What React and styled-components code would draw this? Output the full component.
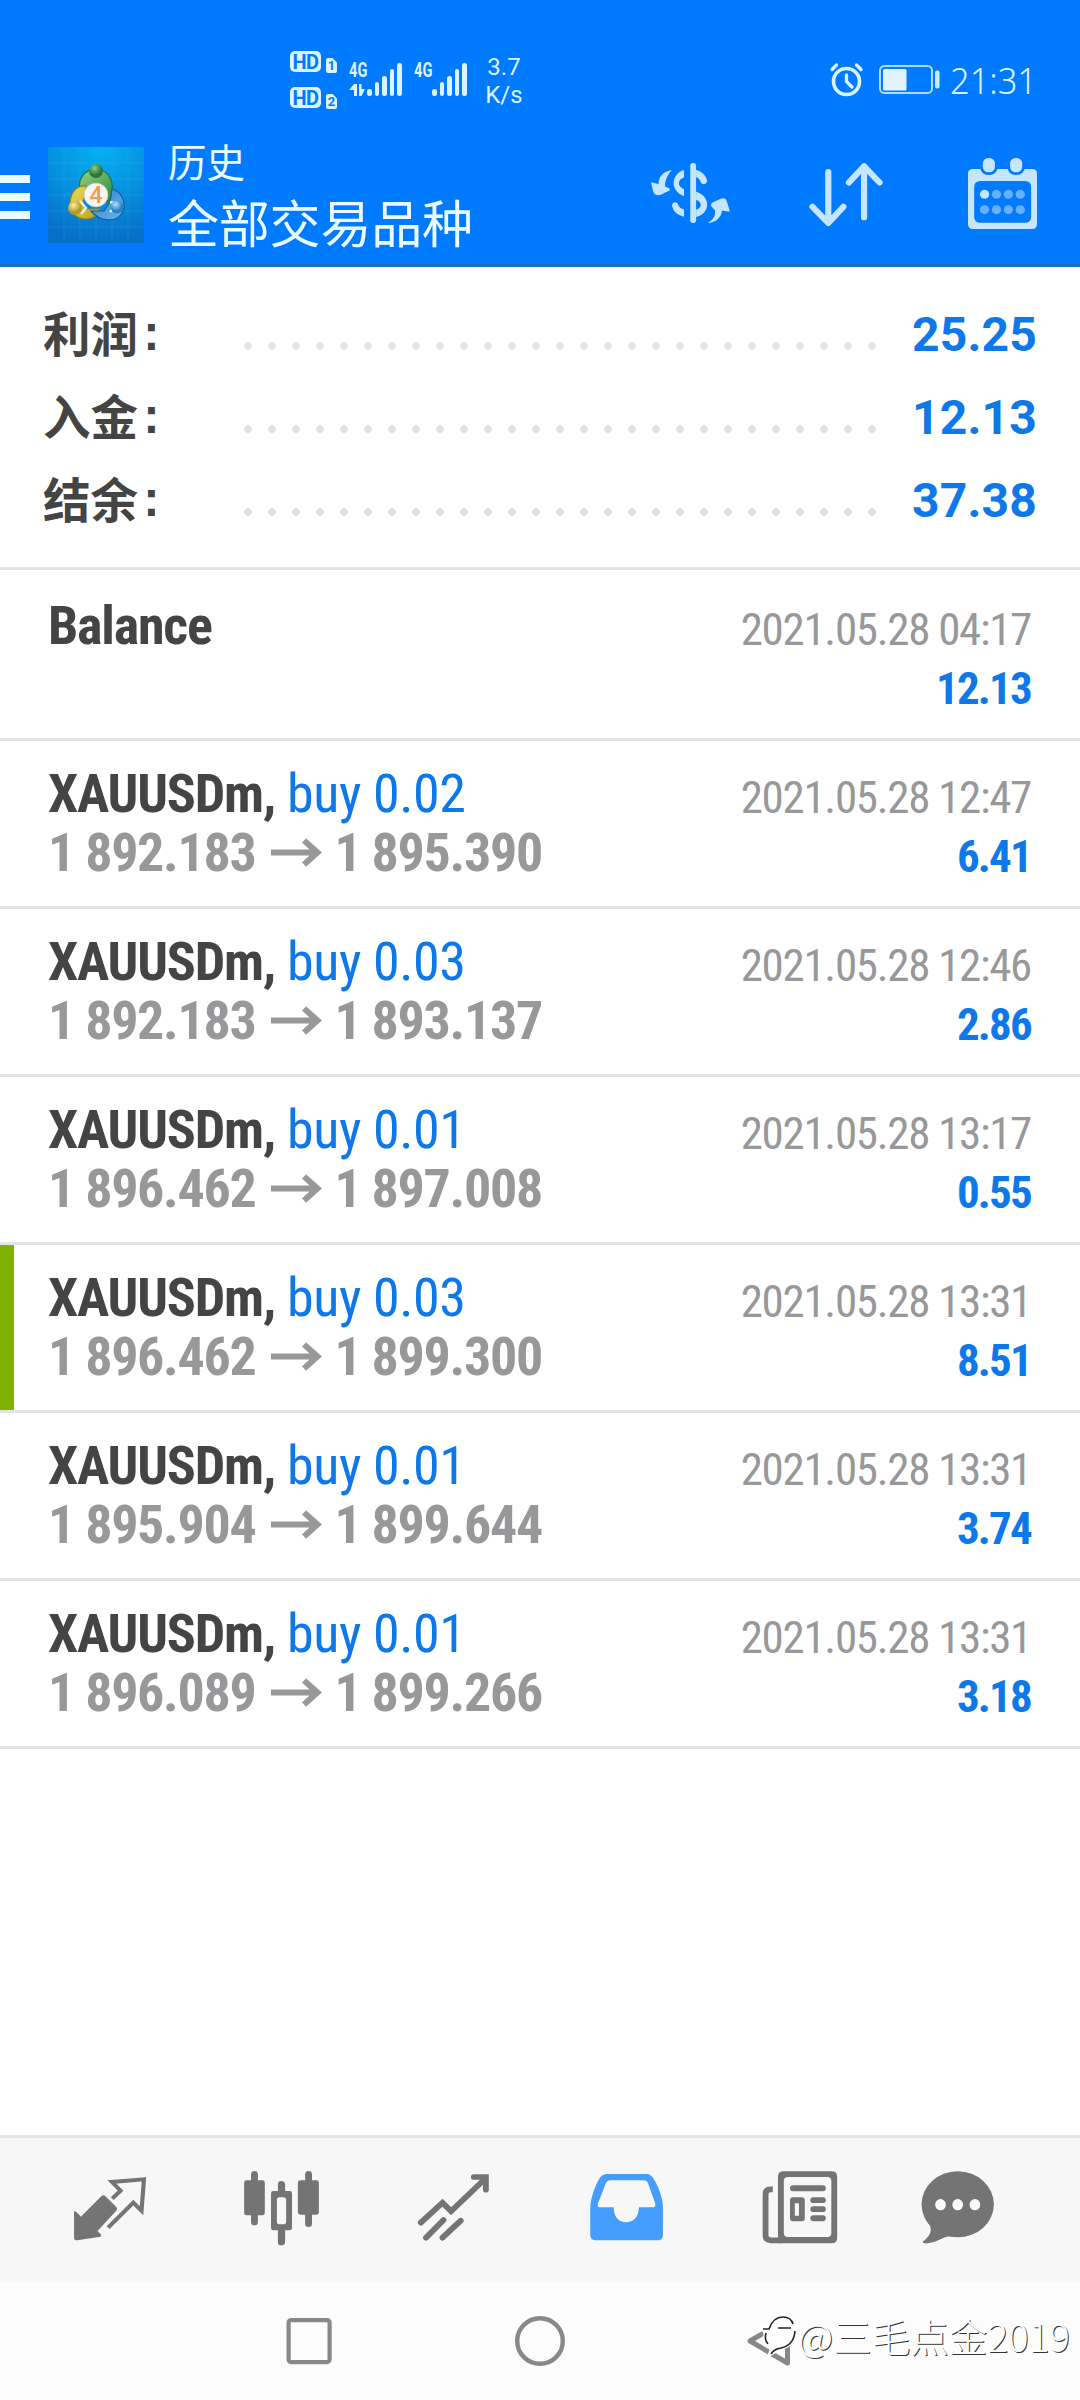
import React from 'react';
import styled, { createGlobalStyle } from 'styled-components';

const Global = createGlobalStyle`
  * { box-sizing: border-box; }
  body { margin: 0; background: #fff; font-family: Roboto, "Noto Sans CJK SC", sans-serif; }
  svg { display: block; overflow: visible; flex: none; }
`;

const Screen = styled.div`
  width: 1080px;
  height: 2400px;
  display: flex;
  flex-direction: column;
  background: #fff;
  overflow: hidden;
  position: relative;
`;

const Header = styled.header`
  height: 267px;
  background: #007aff;
  border-bottom: 3px solid #1a72c4;
  flex: none;
`;

const StatusBar = styled.div`
  height: 112px;
  display: flex;
  align-items: flex-start;
  padding: 51px 48px 0 290px;
  color: #dbf4ff;
`;

const HdColumn = styled.div`
  display: flex;
  flex-direction: column;
  gap: 15px;
  width: 59px;
`;

const HdLine = styled.div`
  display: flex;
  align-items: flex-end;
  gap: 5px;
  height: 21px;
`;

const HdBadge = styled.span`
  width: 31px;
  height: 21px;
  border-radius: 5px;
  background: #dbf4ff;
  color: #007aff;
  font: 700 20px/22px Roboto, sans-serif;
  letter-spacing: -0.5px;
  text-align: center;
`;

const SimBadge = styled.span`
  width: 11px;
  height: 15px;
  margin-bottom: -1px;
  border-radius: 2px;
  clip-path: polygon(0 0, 60% 0, 100% 30%, 100% 100%, 0 100%);
  background: #dbf4ff;
  color: #007aff;
  font: 700 13px/16px Roboto, sans-serif;
  text-align: center;
`;

const Signal = styled.div`
  display: flex;
  width: ${p => p.$width}px;
  padding-top: 12px;
`;

const NetworkLabel = styled.div`
  width: 18px;
  height: 35px;
  display: flex;
  flex-direction: column;
  gap: 6px;
`;

const NetworkText = styled.span`
  font: 700 20px/15px Roboto, sans-serif;
  transform: scaleX(0.73);
  transform-origin: left;
`;

const Bars = styled.div`
  display: flex;
  align-items: flex-end;
  gap: 3px;
  height: 33px;
`;

const Bar = styled.i`
  width: 4.6px;
  height: ${p => p.$h}px;
  border-radius: 2.3px;
  background: #dbf4ff;
`;

const Speed = styled.div`
  width: 48px;
  margin-top: 2px;
  font: 400 24px/28px Roboto, sans-serif;
  text-align: center;
`;

const StatusRight = styled.div`
  margin-left: auto;
  display: flex;
  align-items: flex-start;
  padding-top: 12px;
`;

const Clock = styled.span`
  width: 82px;
  margin-left: 10px;
  font: 300 37px/34px "Noto Sans", Roboto, sans-serif;
  white-space: nowrap;
  transform: scaleX(0.93);
  transform-origin: left;
`;

const Toolbar = styled.div`
  height: 152px;
  display: flex;
  align-items: flex-start;
  color: #eafcff;
`;

const MenuButton = styled.div`
  width: 30px;
  margin: 63px 18px 0 0;
  display: flex;
  flex-direction: column;
  gap: 10px;
`;

const MenuLine = styled.i`
  height: 8px;
  background: #eafcff;
`;

const LogoBox = styled.div`
  margin-top: 35px;
`;

const Titles = styled.div`
  margin: 30px 0 0 24px;
  width: 483px;
`;

const Subtitle = styled.div`
  font: 400 38.5px/44px "Liberation Sans", "Noto Sans CJK SC", sans-serif;
`;

const Title = styled.div`
  margin-top: 10px;
  font: 400 51px/60px "Liberation Sans", "Noto Sans CJK SC", sans-serif;
  letter-spacing: -0.2px;
`;

const Action = styled.div`
  margin-top: ${p => p.$top}px;
  margin-right: ${p => p.$gap}px;
  color: #c6e6ff;
`;

const Summary = styled.section`
  height: 300px;
  padding: 26px 43px 0;
  flex: none;
`;

const SummaryRow = styled.div`
  height: 83px;
  display: flex;
  align-items: center;
`;

const SummaryLabel = styled.span`
  width: 193px;
  color: #444;
  font: 700 47.5px/78px "Noto Sans CJK SC", sans-serif;
  height: 83px;
  display: flex;
`;

const Colon = styled.span`
  margin-left: -1px;
  font: 700 48px/88px "Liberation Mono", monospace;
`;

const Dots = styled.div`
  width: 648px;
  height: 8px;
  margin-top: 23px;
  background: radial-gradient(circle at 12px 4px, #e3e3e3 3.4px, transparent 4.2px) 0 0 / 24px 8px repeat-x;
`;

const SummaryValue = styled.span`
  flex: 1;
  color: #0d78ea;
  font: 700 48px/83px Roboto, sans-serif;
  letter-spacing: 0.2px;
  text-align: right;
  white-space: nowrap;
`;

const History = styled.main`
  flex: 1;
  border-top: 3px solid #e4e4e4;
  padding-top: 3px;
`;

const Deal = styled.article`
  height: 168px;
  display: flex;
  justify-content: space-between;
  padding: 23px 49px 0 48px;
  border-bottom: 3px solid #e4e4e4;
  box-shadow: ${p => (p.$marked ? 'inset 14px 0 0 #7fb200' : 'none')};
`;

const DealInfo = styled.div`
  font: 700 54px/59px "Roboto Condensed", Roboto, sans-serif;
  font-stretch: 75%;
  letter-spacing: -1.2px;
  color: #444;
  white-space: nowrap;
`;

const Side = styled.span`
  font-weight: 400;
  letter-spacing: -0.4px;
  color: #0d78ea;
`;

const Prices = styled.div`
  display: flex;
  align-items: center;
  letter-spacing: -1.3px;
  color: #98989b;

  svg { margin: 0 12px 0 16px; }
`;

const DealMeta = styled.div`
  padding-top: 4px;
  font: 400 45px/59px "Roboto Condensed", Roboto, sans-serif;
  font-stretch: 75%;
  letter-spacing: -1.3px;
  color: #98989b;
  text-align: right;
  white-space: nowrap;
`;

const Amount = styled.div`
  font-weight: 700;
  letter-spacing: -1.8px;
  color: #0d78ea;
`;

const TabBar = styled.nav`
  height: 147px;
  flex: none;
  display: grid;
  grid-template-columns: repeat(6, 172px);
  justify-items: center;
  padding: 29px 24px 0;
  background: #f7f7f7;
  border-top: 3px solid #e4e4e4;
`;

const Tab = styled.div`
  color: ${p => (p.$active ? '#459dff' : '#747474')};
`;

const SystemNav = styled.footer`
  height: 118px;
  flex: none;
  display: grid;
  grid-template-columns: repeat(3, 231px);
  justify-content: center;
  justify-items: center;
  padding-top: 34px;
  background: #fcfcfc;
`;

const Watermark = styled.div`
  position: absolute;
  left: 759px;
  top: 2309px;
  display: flex;
  align-items: center;
  height: 52px;
  color: #fff;
  font: 300 38.6px/52px "Noto Sans CJK SC", sans-serif;
  text-shadow: 1px 1px 0.5px #333;
  white-space: nowrap;
`;

const HD = ({ n }) => (
  <HdLine>
    <HdBadge>HD</HdBadge>
    <SimBadge>{n}</SimBadge>
  </HdLine>
);

const SignalBars = () => (
  <Bars>
    {[7, 14, 20, 27, 33].map(h => <Bar key={h} $h={h} />)}
  </Bars>
);

const DataArrows = () => (
  <svg width="16" height="12" viewBox="0 0 16 12" fill="currentColor">
    <path d="M5 0H8V12H5V6H0Z M10 0H12.5V5H16L12.5 12H10Z" />
  </svg>
);

const AlarmIcon = () => (
  <svg width="33" height="34" viewBox="0 0 33 34" fill="none" stroke="currentColor" strokeLinecap="round">
    <circle cx="16.5" cy="18.5" r="13" strokeWidth="3.6" />
    <path d="M16.5 12V18.5L22 24" strokeWidth="3.4" strokeLinejoin="round" />
    <path d="M2 6.5L6.5 2M31 6.5L26.5 2" strokeWidth="3.4" />
  </svg>
);

const Battery = styled.svg`
  margin: 2px 0 0 16px;
`;

const BatteryIcon = () => (
  <Battery width="61" height="29" viewBox="0 0 61 29">
    <rect x="1" y="1" width="52" height="27" rx="4.5" fill="none" stroke="#a9dcff" strokeWidth="2" />
    <rect x="4" y="4" width="23.5" height="21.5" rx="1.5" fill="#e2f2ff" />
    <rect x="56" y="5.5" width="4.5" height="18" rx="2" fill="#c9ebff" />
  </Battery>
);

const Logo = () => (
  <svg width="96" height="96" viewBox="0 0 96 96">
    <defs>
      <radialGradient id="sky" cx="0.55" cy="0" r="1">
        <stop offset="0" stopColor="#05b1f2" />
        <stop offset="0.5" stopColor="#0693df" />
        <stop offset="1" stopColor="#066fc8" />
      </radialGradient>
      <linearGradient id="green" x2="1" y2="1"><stop stopColor="#9bd187" /><stop offset="1" stopColor="#2c8a35" /></linearGradient>
      <linearGradient id="gold" x2="1" y2="1"><stop stopColor="#efdc5c" /><stop offset="1" stopColor="#b7a01f" /></linearGradient>
      <linearGradient id="azure" x2="1" y2="1"><stop stopColor="#2a83cb" /><stop offset="1" stopColor="#69b5ec" /></linearGradient>
      <radialGradient id="gBall" cx="0.4" cy="0.3"><stop stopColor="#8ccf83" /><stop offset="1" stopColor="#29783a" /></radialGradient>
      <radialGradient id="yBall" cx="0.4" cy="0.3"><stop stopColor="#fff0a0" /><stop offset="1" stopColor="#b29a2d" /></radialGradient>
      <radialGradient id="bBall" cx="0.4" cy="0.3"><stop stopColor="#b5e2ff" /><stop offset="1" stopColor="#2b7fc2" /></radialGradient>
    </defs>
    <rect width="96" height="96" fill="url(#sky)" />
    <path d="M16 0V96M32 0V96M48 0V96M64 0V96M80 0V96M0 16H96M0 32H96M0 48H96M0 64H96M0 80H96" stroke="#5cc8ff" strokeOpacity="0.14" strokeWidth="1" />
    <path d="M33 46C29 36 33 23 48 22C62 23 67 36 63 50L60 56L53 42Q47 35 42 42Z" fill="url(#green)" stroke="#1e7442" strokeWidth="1.2" />
    <path d="M38 39C28 38 22 46 22 58C23 70 36 76 48 69L52 62L38 62Q32 58 38 48Z" fill="url(#gold)" stroke="#85812a" strokeWidth="1.2" />
    <path d="M64 42C74 45 79 56 74 66C68 76 52 75 43 64L56 64L62 55Z" fill="url(#azure)" stroke="#145c9c" strokeWidth="1.2" />
    <path d="M32 54L38 61L33 67M62 55L70 57L62 65" fill="none" stroke="#e6f3e2" strokeWidth="2.4" />
    <circle cx="48" cy="24" r="7" fill="url(#gBall)" />
    <circle cx="27" cy="61" r="7" fill="url(#yBall)" />
    <circle cx="69" cy="60" r="6.5" fill="url(#bBall)" />
    <circle cx="48" cy="48" r="12" fill="#f7f5f3" stroke="#b9bdb5" strokeWidth="0.6" />
    <text x="48" y="56" textAnchor="middle" fill="#ee9d4b" fontFamily="Roboto, sans-serif" fontSize="23" fontWeight="500">4</text>
  </svg>
);

const CurrencyIcon = () => (
  <svg width="78.5" height="60" viewBox="322 398 228 181" preserveAspectRatio="none" fill="currentColor">
    <rect x="436" y="398" width="17" height="181" rx="8" />
    <path d="M383 419C358 424 344 438 344 461L322 456L329 486Q335 498 350 494L376 481V475L363 469C362 450 372 430 383 419Z" />
    <path d="M487 579C500 570 510 560 508 541L496 527L498 519L524 506Q537 501 541 510L550 540V545L528 541C527 562 510 577 487 579Z" />
    <path d="M418 419C380 430 376 482 418 498V477C398 469 398 449 418 441Z" />
    <path d="M383 527C383 514 398 512 401 524Q405 535 418 538V560Q387 552 383 527Z" />
    <path d="M453 418Q480 427 485 451C485 464 470 465 466 455Q464 445 453 440Z" />
    <path d="M453 485C498 499 494 552 453 561V539C471 534 471 516 453 509Z" />
  </svg>
);

const SortIcon = () => (
  <svg width="74" height="63" viewBox="781 398 215 190" preserveAspectRatio="none" fill="none" stroke="currentColor" strokeWidth="18" strokeLinecap="round" strokeLinejoin="round">
    <path d="M837 425V578M791 530L837 579L881 530" />
    <path d="M941 562V408M897 457L941 408L986 457" />
  </svg>
);

const CalendarIcon = () => (
  <svg width="69" height="71" viewBox="1243 384 200 213" preserveAspectRatio="none" fill="currentColor">
    <path fillRule="evenodd" d="M1257 417H1429Q1443 417 1443 431V583Q1443 597 1429 597H1257Q1243 597 1243 583V431Q1243 417 1257 417ZM1279 453Q1261 453 1261 471V560Q1261 578 1279 578H1408Q1426 578 1426 560V471Q1426 453 1408 453Z" />
    {[1286, 1365].map(x => (
      <rect key={x} x={x - 4} y="380" width="43" height="51" rx="20" stroke="#007aff" strokeWidth="8" />
    ))}
    {[493, 539].map(y => [1291, 1325.5, 1360, 1394.5].map(x => (
      <circle key={x + '-' + y} cx={x} cy={y} r="13.5" fill={x === 1291 && y === 493 ? '#c6e6ff' : '#66b0ff'} />
    )))}
  </svg>
);

const TabSvg = ({ cx, children }) => (
  <svg width="100" height="80" viewBox={`${cx - 145.2} 140 290.4 240`} preserveAspectRatio="none" fill="currentColor">
    {children}
  </svg>
);

const QuotesIcon = () => (
  <TabSvg cx={319.4}>
    <path d="M294 228Q300 222 306 228L337 259Q343 266 337 272L283 332L294 343L292 349L224 360Q215 360 215 352V272Q223 274 235 289Z" />
    <path d="M326 235L350 211L325 185L418 177L411 271L387 247L314 322" fill="none" stroke="currentColor" strokeWidth="12" />
  </TabSvg>
);

const ChartIcon = () => (
  <TabSvg cx={818.9}>
    <rect x="709" y="180" width="60" height="105" rx="7" />
    <rect x="729" y="152" width="20" height="163" rx="10" />
    <rect x="865" y="180" width="61" height="103" rx="7" />
    <rect x="886" y="152" width="20" height="168" rx="10" />
    <path fillRule="evenodd" d="M794 212H807V192Q807 182 817 182T828 192V212H841Q848 212 848 219V323Q848 330 841 330H828V365Q828 375 817 375T807 365V330H794Q787 330 787 323V219Q787 212 794 212ZM812 231Q804 231 804 239V304Q804 312 812 312H823Q831 312 831 304V239Q831 231 823 231Z" />
  </TabSvg>
);

const TradeIcon = () => (
  <TabSvg cx={1318.4}>
    <g fill="none" stroke="currentColor" strokeWidth="17" strokeLinecap="round">
      <path d="M1222 307L1285 247L1310 273L1408 176" />
      <path d="M1376 170H1411V208" />
      <path d="M1237 352L1288 299M1285 352L1338 301" />
    </g>
  </TabSvg>
);

const HistoryIcon = () => (
  <TabSvg cx={249.7}>
    <path fillRule="evenodd" d="M195 161H310Q322 161 330 175C345 200 357 235 357 260V345Q357 360 342 360H162Q146 360 146 345V260C147 235 158 200 172 175Q180 161 195 161ZM205 180Q194 180 190 192L168 250Q166 261 175 261H214C214 292 230 306 250 306S287 292 287 261H328Q336 261 335 250L314 190Q311 180 300 180Z" />
  </TabSvg>
);

const NewsIcon = () => (
  <TabSvg cx={749.2}>
    <path fillRule="evenodd" d="M707 153H847Q863 153 863 169V353Q863 369 847 369H691V169Q691 153 707 153ZM720 170Q708 170 708 182V338Q708 350 720 350H834Q846 350 846 338V182Q846 170 834 170Z" />
    <path d="M676 207H669Q655 207 655 221V345Q655 360 670 360H700" fill="none" stroke="currentColor" strokeWidth="17" />
    <rect x="726" y="195" width="104" height="18" rx="9" />
    <path fillRule="evenodd" d="M735 231H760Q769 231 769 240V294Q769 303 760 303H735Q726 303 726 294V240Q726 231 735 231ZM740 249V286H752V249Z" />
    <rect x="785" y="231" width="45" height="17" rx="8.5" />
    <rect x="785" y="258" width="45" height="17" rx="8.5" />
    <rect x="785" y="285" width="45" height="18" rx="9" />
  </TabSvg>
);

const ChatIcon = () => (
  <TabSvg cx={1248.7}>
    <ellipse cx="1213" cy="252" rx="105" ry="99" />
    <path d="M1119 296Q1139 318 1134 335Q1128 353 1111 364Q1112 370 1125 369C1150 367 1172 350 1188 348L1230 345Z" />
    {[1163, 1213, 1263].map(x => <ellipse key={x} cx={x} cy="253" rx="15.5" ry="17" fill="#fbfbfb" />)}
  </TabSvg>
);

const ArrowIcon = () => (
  <svg width="51" height="27" viewBox="0 0 51 27" fill="none" stroke="currentColor" strokeWidth="6">
    <path d="M0 13.5H47M33 1.5L46.5 13.5L33 25.5" />
  </svg>
);

const SpiderIcon = () => (
  <svg width="39" height="44" viewBox="0 0 39 44" fill="none">
    <path d="M4 15H10Q14 3 24 3Q33 3 34 13H37Q36 32 22 34L12 40L14 34Q6 30 7 20Z" fill="#fff" stroke="#fff" strokeWidth="5" />
    <path d="M4 16H10Q14 4 24 4Q32 4 34 11M7 20Q5 27 9 31M12 41Q15 36 22 35Q35 32 36 18M19 15H32" stroke="#222" strokeWidth="1.6" />
  </svg>
);

const totals = [
  ['利润', '25.25'],
  ['入金', '12.13'],
  ['结余', '37.38'],
];

const deals = [
  { name: 'Balance', time: '2021.05.28 04:17', amount: '12.13' },
  { name: 'XAUUSDm,', side: 'buy 0.02', from: '1 892.183', to: '1 895.390', time: '2021.05.28 12:47', amount: '6.41' },
  { name: 'XAUUSDm,', side: 'buy 0.03', from: '1 892.183', to: '1 893.137', time: '2021.05.28 12:46', amount: '2.86' },
  { name: 'XAUUSDm,', side: 'buy 0.01', from: '1 896.462', to: '1 897.008', time: '2021.05.28 13:17', amount: '0.55' },
  { name: 'XAUUSDm,', side: 'buy 0.03', from: '1 896.462', to: '1 899.300', time: '2021.05.28 13:31', amount: '8.51', marked: true },
  { name: 'XAUUSDm,', side: 'buy 0.01', from: '1 895.904', to: '1 899.644', time: '2021.05.28 13:31', amount: '3.74' },
  { name: 'XAUUSDm,', side: 'buy 0.01', from: '1 896.089', to: '1 899.266', time: '2021.05.28 13:31', amount: '3.18' },
];

export default function App() {
  return (
    <>
      <Global />
      <Screen>
        <Header>
          <StatusBar>
            <HdColumn><HD n="1" /><HD n="2" /></HdColumn>
            <Signal $width={65}>
              <NetworkLabel><NetworkText>4G</NetworkText><DataArrows /></NetworkLabel>
              <SignalBars />
            </Signal>
            <Signal $width={66}>
              <NetworkLabel><NetworkText>4G</NetworkText></NetworkLabel>
              <SignalBars />
            </Signal>
            <Speed>3.7<br />K/s</Speed>
            <StatusRight>
              <AlarmIcon />
              <BatteryIcon />
              <Clock>21:31</Clock>
            </StatusRight>
          </StatusBar>
          <Toolbar>
            <MenuButton><MenuLine /><MenuLine /><MenuLine /></MenuButton>
            <LogoBox><Logo /></LogoBox>
            <Titles>
              <Subtitle>历史</Subtitle>
              <Title>全部交易品种</Title>
            </Titles>
            <Action $top={51} $gap={79.5}><CurrencyIcon /></Action>
            <Action $top={51} $gap={85}><SortIcon /></Action>
            <Action $top={46} $gap={0}><CalendarIcon /></Action>
          </Toolbar>
        </Header>

        <Summary>
          {totals.map(([label, value]) => (
            <SummaryRow key={label}>
              <SummaryLabel>{label}<Colon>:</Colon></SummaryLabel>
              <Dots />
              <SummaryValue>{value}</SummaryValue>
            </SummaryRow>
          ))}
        </Summary>

        <History>
          {deals.map((d, i) => (
            <Deal key={i} $marked={d.marked}>
              <DealInfo>
                <div>{d.name}{d.side && <Side> {d.side}</Side>}</div>
                {d.from && <Prices><span>{d.from}</span><ArrowIcon /><span>{d.to}</span></Prices>}
              </DealInfo>
              <DealMeta>
                {d.time}
                <Amount>{d.amount}</Amount>
              </DealMeta>
            </Deal>
          ))}
        </History>

        <TabBar>
          <Tab><QuotesIcon /></Tab>
          <Tab><ChartIcon /></Tab>
          <Tab><TradeIcon /></Tab>
          <Tab $active><HistoryIcon /></Tab>
          <Tab><NewsIcon /></Tab>
          <Tab><ChatIcon /></Tab>
        </TabBar>

        <SystemNav>
          <svg width="50" height="50" viewBox="0 0 50 50" fill="none" stroke="#888" strokeWidth="4.2">
            <rect x="4.6" y="4.1" width="41" height="42" rx="2.5" />
          </svg>
          <svg width="50" height="50" viewBox="0 0 50 50" fill="none" stroke="#888" strokeWidth="4.4">
            <circle cx="25" cy="25" r="22.8" />
          </svg>
          <svg width="50" height="50" viewBox="0 0 50 50" fill="none" stroke="#888" strokeWidth="5" strokeLinejoin="round">
            <path d="M4 25L41.5 3V47Z" />
          </svg>
        </SystemNav>

        <Watermark><SpiderIcon />@三毛点金2019</Watermark>
      </Screen>
    </>
  );
}
